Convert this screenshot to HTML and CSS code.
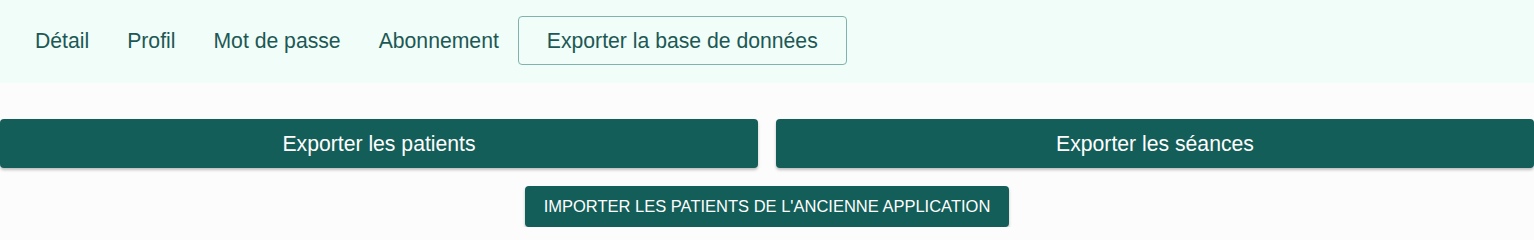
FILE: index.html
```html
<!DOCTYPE html>
<html lang="fr">
<head>
<meta charset="utf-8">
<title>Exporter la base de données</title>
<link rel="stylesheet" href="styles.css">
</head>
<body>
<header class="tabs-bar">
  <nav class="tabs">
    <a class="tab">Détail</a>
    <a class="tab">Profil</a>
    <a class="tab">Mot de passe</a>
    <a class="tab">Abonnement</a>
    <a class="tab tab-active">Exporter la base de données</a>
  </nav>
</header>
<main class="content">
  <div class="export-row">
    <button class="btn btn-wide">Exporter les patients</button>
    <button class="btn btn-wide">Exporter les séances</button>
  </div>
  <div class="import-row">
    <button class="btn btn-import">Importer les patients de l'ancienne application</button>
  </div>
</main>
</body>
</html>
```
FILE: styles.css
```css
* { box-sizing: border-box; }
html, body {
  margin: 0;
  padding: 0;
}
body {
  background: #fcfcfc;
  font-family: "Liberation Sans", Arial, sans-serif;
}
.tabs-bar {
  background: #f0fdf8;
  height: 83px;
  padding: 16px 0 0 16px;
}
.tabs {
  display: flex;
  align-items: center;
}
.tab {
  display: flex;
  align-items: center;
  height: 49px;
  padding: 0 18px;
  font-size: 21.2px;
  color: #1d5855;
  border: 1px solid transparent;
  border-radius: 4px;
  cursor: pointer;
}
.tab-active {
  border-color: #80b3ab;
  padding: 0 28px;
}
.content {
  padding-top: 36px;
}
.export-row {
  display: flex;
  gap: 18px;
}
.btn {
  background: #135e58;
  color: #ffffff;
  border: none;
  border-radius: 4px;
  font-family: "Liberation Sans", Arial, sans-serif;
  box-shadow: 0 2px 3px rgba(0, 0, 0, 0.25);
  cursor: pointer;
}
.btn-wide {
  flex: 1;
  height: 49px;
  font-size: 21.2px;
}
.import-row {
  display: flex;
  justify-content: center;
  margin-top: 18px;
}
.btn-import {
  width: 484px;
  height: 41px;
  font-size: 16.5px;
  text-transform: uppercase;
}
```
